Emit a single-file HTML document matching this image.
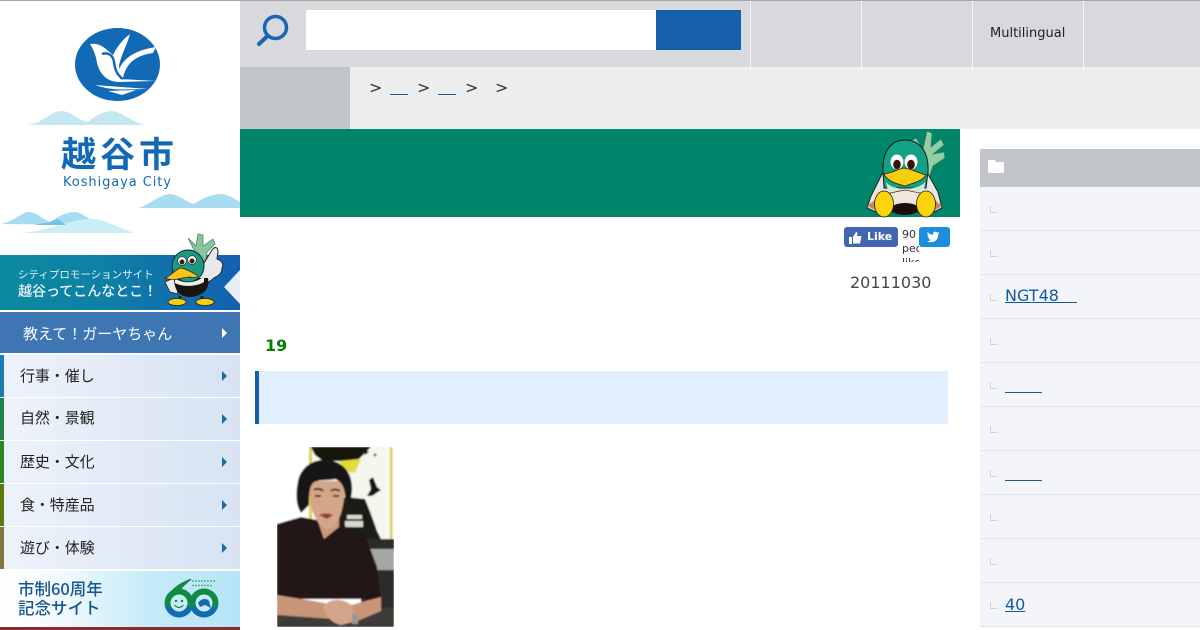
<!DOCTYPE html>
<html lang="ja"><head><meta charset="utf-8"><title>越谷市</title>
<style>
html,body{margin:0;padding:0}
body{width:1200px;height:630px;overflow:hidden;position:relative;background:#fff;font-family:"DejaVu Sans","Noto Sans CJK JP",sans-serif;color:#333}
.a{position:absolute}
.jp{font-family:"Noto Sans CJK JP","DejaVu Sans",sans-serif}
.nav{position:absolute;left:0;width:240px;height:42px;background:linear-gradient(90deg,#eef3fa 0,#dfe9f6 60%,#d7e4f3 100%);font-size:15px;color:#222}
.nav i{position:absolute;left:0;top:0;width:4px;height:100%}
.nav span{position:absolute;left:20px;top:10px;line-height:22px;letter-spacing:-.1px}
.nav b{position:absolute;left:222px;top:16px;width:0;height:0;border-left:5px solid #1c6a9e;border-top:5px solid transparent;border-bottom:5px solid transparent}
.row{position:absolute;left:980px;width:220px;height:43px;background:#f3f5f8;border-bottom:1px solid #e2e5e8}
.row i{position:absolute;left:10px;top:19px;width:6px;height:6px;border-left:1px solid #d0d3d6;border-bottom:1px solid #d0d3d6}
.row a{position:absolute;left:25px;top:11px;font-size:16px;line-height:20px;color:#0f5a9e;text-decoration:underline}
.u{position:absolute;height:1px;background:#1e5a92}
.sep{position:absolute;top:0;width:1px;height:71px;background:#f4f5f6}
.bc{position:absolute;top:78px;font-size:16px;line-height:20px;color:#333}
</style></head><body>

<!-- header -->
<div class="a" style="left:240px;top:1px;width:960px;height:66px;background:#d8d9dc"></div>
<div class="a" style="left:240px;top:67px;width:960px;height:62px;background:#eceef0"></div>
<div class="a" style="left:240px;top:67px;width:110px;height:62px;background:#c1c4c8"></div>
<div class="sep" style="left:750px"></div><div class="sep" style="left:861px"></div><div class="sep" style="left:972px"></div><div class="sep" style="left:1083px"></div>
<div class="a" style="left:0;top:0;width:1200px;height:1px;background:#a6a6a6"></div>
<svg class="a" style="left:255px;top:13px" width="36" height="36" viewBox="0 0 36 36"><circle cx="20.500" cy="14.500" r="11" fill="none" stroke="#1b66b0" stroke-width="3.500"/><path d="M12.500 23 L4 31" stroke="#1b66b0" stroke-width="4" stroke-linecap="round"/></svg>
<div class="a" style="left:306px;top:10px;width:350px;height:40px;background:#fff"></div>
<div class="a" style="left:656px;top:10px;width:85px;height:40px;background:#1560a8"></div>
<div class="a" style="left:990px;top:26px;font-size:13px;line-height:16px;color:#222">Multilingual</div>

<!-- breadcrumb -->
<div class="bc" style="left:369px">&gt;</div>
<div class="u" style="left:390px;top:94px;width:18px"></div>
<div class="bc" style="left:417px">&gt;</div>
<div class="u" style="left:438px;top:94px;width:18px"></div>
<div class="bc" style="left:465px">&gt;</div>
<div class="bc" style="left:495px">&gt;</div>

<!-- logo -->
<svg class="a" style="left:0;top:0" width="240" height="235" viewBox="0 0 240 235">
<ellipse cx="117.500" cy="64.500" rx="42.500" ry="36.500" fill="#1269b5"/>
<path d="M90 44 C96 43 101 45 106 49 L113 55 C117 47 122 40 130 34 C127 45 121 55 119 66 L120 79 L156 81 L118 82 C106 81 100 74 97 63 C96 55 93 49 90 44Z" fill="#fff"/>
<path d="M118 78 C117 65 128 51 156 47 L153 53 C138 55 126 62 123 78Z" fill="#fff"/>
<path d="M102 54 C108 52 113 55 114 62 C115 70 117 75 123 79" fill="none" stroke="#1269b5" stroke-width="2.500"/>
<path d="M95 85 L148 89 L120 89.500 C108 89 101 87 95 85Z M108 91 L136 90 L122 95Z" fill="#fff"/>
<path d="M28 125 C45 122 52 110 62 111 C72 112 78 120 88 122 C95 116 104 111 112 111 C122 112 132 122 145 125Z" fill="#c5e8f0"/>
<path d="M138 208 C150 205 160 194 170 194 C180 195 186 202 194 204 C202 198 212 194 222 194 C230 195 236 200 240 202 L240 208Z" fill="#a8dcf0"/>
<path d="M0 224 C15 222 20 212 30 212 C38 213 44 220 50 222 C58 217 65 212 75 212 C84 213 90 222 105 225Z" fill="#a6dcf0"/>
<path d="M20 233 C40 232 55 226 62 224 C72 222 82 218 95 219 C105 220 120 228 134 233Z" fill="#c9eef6"/>
<path d="M34 225 L50 222 L58 219 L66 225Z" fill="#6fc3e4"/>
<text x="61" y="167" font-family="Noto Sans CJK JP,sans-serif" font-weight="700" font-size="35" fill="#1269b5" textLength="113">越谷市</text>
<text x="63" y="186" font-family="DejaVu Sans,sans-serif" font-size="13" fill="#1269b5" textLength="108">Koshigaya City</text>
</svg>

<!-- promo banner -->
<div class="a" style="left:0;top:255px;width:240px;height:55px;background:linear-gradient(90deg,#0d8aa0 0,#0f7fa6 45%,#1460b0 100%)"></div>
<div class="a" style="left:224px;top:270px;width:0;height:0;border-right:16px solid #e8eef5;border-top:17px solid transparent;border-bottom:17px solid transparent"></div>
<div class="a jp" style="left:18px;top:266px;font-size:10.500px;line-height:17px;color:#e6f2f6;white-space:nowrap">シティプロモーションサイト</div>
<div class="a jp" style="left:18px;top:281px;font-size:14px;line-height:20px;color:#f0f6f8;white-space:nowrap;font-weight:500">越谷ってこんなとこ！</div>
<svg class="a" style="left:160px;top:232px" width="70" height="76" viewBox="0 0 70 76">
<path d="M28 6 L36 14 L38 2 L43 3 L43 14 L53 7 L55 12 L47 20 L46 28 L40 28 L34 18Z" fill="#86c69a" stroke="#3c7a55" stroke-width=".7"/>
<path d="M37 28 L45 22 L44 36 L38 38Z" fill="#86c69a"/>
<path d="M52 18 C55 14 58 15 58 20 L57 27 C62 28 64 33 62 36 C62 42 58 44 54 46 L44 54 L36 44Z" fill="#e6e8ec" stroke="#222" stroke-width="1"/>
<path d="M5 50 L14 46 L18 62 L10 60Z" fill="#e6e8ec" stroke="#222" stroke-width=".7"/>
<path d="M14 46 H48 C50 54 46 64 30 65 C18 65 14 56 14 46Z" fill="#1a1310"/>
<ellipse cx="28" cy="34" rx="16" ry="16" fill="#1a9a80" stroke="#123" stroke-width="1"/>
<path d="M15 46 C22 52 36 52 44 44 L44 50 C36 55 22 55 15 51Z" fill="#e8f2ec"/>
<circle cx="22" cy="29" r="4.300" fill="#fff" stroke="#222" stroke-width=".6"/><circle cx="32" cy="28" r="4.300" fill="#fff" stroke="#222" stroke-width=".6"/><circle cx="22" cy="30" r="2.500" fill="#3a1d10"/><circle cx="32" cy="29" r="2.500" fill="#3a1d10"/>
<path d="M5 46 C11 44 15 38 20 36 C26 36 32 41 37 43 C38 46 35 46 30 45 C22 45 15 50 5 46Z" fill="#f8c415" stroke="#222" stroke-width=".7"/>
<path d="M20 64 V68 M42 64 V68" stroke="#222" stroke-width="3"/>
<ellipse cx="17" cy="70" rx="9" ry="3.500" fill="#f8cf10" stroke="#222" stroke-width=".8"/><ellipse cx="45" cy="70" rx="9" ry="3.500" fill="#f8cf10" stroke="#222" stroke-width=".8"/>
</svg>

<!-- blue menu -->
<div class="a" style="left:0;top:312px;width:240px;height:41px;background:#3d76b3"></div>
<div class="a jp" style="left:23px;top:323px;font-size:15px;line-height:22px;color:#fff;white-space:nowrap">教えて！ガーヤちゃん</div>
<div class="a" style="left:222px;top:328px;width:0;height:0;border-left:5px solid #fff;border-top:5px solid transparent;border-bottom:5px solid transparent"></div>

<div class="nav" style="top:355px"><i style="background:#1f7bb0"></i><span>行事・催し</span><b></b></div>
<div class="nav" style="top:398px"><i style="background:#218048"></i><span style="top:9px">自然・景観</span><b></b></div>
<div class="nav" style="top:441px"><i style="background:#2a8a1d"></i><span>歴史・文化</span><b></b></div>
<div class="nav" style="top:484px"><i style="background:#5b7d10"></i><span>食・特産品</span><b></b></div>
<div class="nav" style="top:527px"><i style="background:#84763f"></i><span>遊び・体験</span><b></b></div>

<!-- 60th banner -->
<div class="a" style="left:0;top:571px;width:240px;height:56px;background:linear-gradient(90deg,#fff 0,#f4fbfe 22%,#c7ecf8 60%,#b4e5f6 100%)"></div>
<div class="a jp" style="left:18px;top:579px;font-size:16.500px;line-height:19px;color:#17568f;white-space:nowrap;font-weight:500">市制60周年<br>記念サイト</div>
<svg class="a" style="left:163px;top:576px" width="58" height="44" viewBox="0 0 58 44">
<defs><linearGradient id="g" x1="0" y1="0" x2="0" y2="1"><stop offset="0" stop-color="#118a45"/><stop offset=".55" stop-color="#118a45"/><stop offset=".7" stop-color="#126cb2"/><stop offset="1" stop-color="#126cb2"/></linearGradient></defs>
<path d="M27 3 C16 7 6 14 3 24 L12 22 C16 14 22 9 29 3Z" fill="#118a45"/>
<circle cx="16" cy="27" r="14.500" fill="url(#g)"/>
<circle cx="41" cy="27" r="14.500" fill="url(#g)"/>
<circle cx="16" cy="27" r="8.500" fill="#c8ebf6"/><circle cx="13" cy="25" r="1.200" fill="#118a45"/><circle cx="19" cy="25" r="1.200" fill="#118a45"/><path d="M11.500 29 Q16 34 20.500 29" stroke="#118a45" stroke-width="1.200" fill="none"/>
<circle cx="41" cy="27" r="8.500" fill="#c8ebf6"/><path d="M35 27 C38 22 44 22 46 25 L48 32 L42 29 L37 31Z" fill="#126cb2"/>
<path d="M29 5 H52 M29 9.500 H50" stroke="#118a45" stroke-width="1.500" stroke-dasharray="2 1" opacity=".6"/>
</svg>
<div class="a" style="left:0;top:627px;width:240px;height:3px;background:#8c2a2d"></div>

<!-- green title -->
<div class="a" style="left:240px;top:129px;width:720px;height:88px;background:#00846a"></div>
<svg class="a" style="left:860px;top:128px" width="90" height="90" viewBox="0 0 90 90">
<path d="M51 13 L56 10 L63 21 L67 3 L72 5 L71 19 L81 11 L84 17 L73 26 L84 24 L85 30 L73 38 L69 50 L62 48 L62 30Z" fill="#8fcfa4" stroke="#3a7a55" stroke-width=".7"/>
<path d="M22 46 L11 68 L7 80 L16 84 L74 84 L82 80 L78 64 L68 46Z" fill="#e8e6e2" stroke="#222" stroke-width="1"/>
<path d="M7 78 L15 72 L15 82Z M82 78 L75 72 L75 82Z" fill="#c98468"/>
<path d="M23 44 C22 22 32 12 45 12 C60 12 69 24 68 44 L66 60 L24 60Z" fill="#14a083" stroke="#1a1a1a" stroke-width="1"/>
<ellipse cx="37" cy="34" rx="6.500" ry="7.500" fill="#fff"/><ellipse cx="51" cy="34" rx="6.500" ry="7.500" fill="#fff"/>
<ellipse cx="37" cy="36.500" rx="3.800" ry="4.800" fill="#3a1408"/><ellipse cx="51" cy="36.500" rx="3.800" ry="4.800" fill="#3a1408"/>
<path d="M26 54 C32 63 58 63 65 54 L64 63 L28 63Z" fill="#cfeadc"/>
<path d="M24 46 C33 45 38 41 44 40 C52 41 58 45 66 47 C62 54 52 55 45 58 C38 56 28 54 24 46Z" fill="#f9cf0b" stroke="#222" stroke-width=".8"/>
<path d="M30 65 L45 62 L60 65 L60 78 L30 78Z" fill="#efe6dc" stroke="#5c2c1c" stroke-width=".7"/>
<ellipse cx="45" cy="81" rx="14" ry="6" fill="#1a0f0c"/>
<ellipse cx="24" cy="76" rx="9.500" ry="13" fill="#fbd40a" stroke="#222" stroke-width=".8"/>
<ellipse cx="66" cy="76" rx="9.500" ry="13" fill="#fbd40a" stroke="#222" stroke-width=".8"/>
</svg>

<!-- social -->
<div class="a" style="left:844px;top:227px;width:54px;height:20px;background:#4267b2;border-radius:3px;color:#fff;font-size:11px;font-weight:700;line-height:20px;text-indent:23px">Like</div>
<svg class="a" style="left:849px;top:231px" width="13" height="13" viewBox="0 0 13 13"><path d="M0 6 H3 V13 H0Z M4 6 L7 1 C8.500 1 9 2.500 8 5 H12.500 L11 12.500 H4Z" fill="#fff"/></svg>
<div class="a" style="left:902px;top:228px;width:17px;height:34px;overflow:hidden;font-size:11px;line-height:14px;color:#333">90<br>people<br>like</div>
<div class="a" style="left:919px;top:227px;width:31px;height:20px;background:#1b8fdd;border-radius:3px"></div>
<svg class="a" style="left:927px;top:231px" width="13" height="12" viewBox="0 0 24 22"><path d="M23 3.500 C22 4 21 4.300 20.300 4.400 C21.300 3.800 22 2.800 22.400 1.700 C21.400 2.300 20.300 2.700 19.100 3 C17 .8 13.700 .8 12 2.800 C11 4 10.700 5.400 11 7 C7 6.800 3.500 5 1.300 2 C0 4.300 .7 7 3 8.600 C2.200 8.600 1.400 8.300 .8 8 C.8 10.400 2.500 12.400 4.800 12.900 C4 13.100 3.300 13.100 2.600 13 C3.300 15 5 16.300 7.300 16.400 C5.200 18 2.700 18.700 .2 18.500 C2.500 20 5 20.700 7.700 20.700 C16 20.700 21 13.700 20.600 6.200 C21.600 5.500 22.400 4.600 23 3.500Z" fill="#fff"/></svg>

<!-- article -->
<div class="a" style="left:850px;top:273px;font-size:16px;line-height:20px;color:#444">20111030</div>
<div class="a" style="left:265px;top:336px;font-size:16px;line-height:20px;font-weight:700;color:#008000">19</div>
<div class="a" style="left:255px;top:371px;width:693px;height:53px;background:#e1eefb"></div>
<div class="a" style="left:255px;top:371px;width:4px;height:53px;background:#1560a8"></div>

<!-- photo -->
<svg class="a" style="left:277px;top:447px" width="117" height="180" viewBox="0 0 117 180">
<defs><clipPath id="c"><rect width="117" height="180"/></clipPath><filter id="b" x="-5%" y="-5%" width="110%" height="110%"><feGaussianBlur stdDeviation=".7"/></filter></defs>
<g clip-path="url(#c)"><g filter="url(#b)">
<rect width="117" height="180" fill="#fff"/>
<rect x="32" y="0" width="84" height="94" fill="#f6f5ee"/>
<rect x="32" y="0" width="3" height="94" fill="#d8d040"/><rect x="113" y="0" width="2.500" height="94" fill="#d8d040"/>
<path d="M34 0 H94 L88 6 L82 12 L66 14 L46 14 L38 8Z" fill="#17170f"/>
<path d="M62 14 L84 12 L78 26 L68 24Z" fill="#e3dd3a"/>
<path d="M86 2 L92 5 L88 8Z M97 6 L100 8 L97 10Z" fill="#1a1a14"/>
<path d="M92 33 L96 30 L100 40 L104 43 L95 49 L90 49 L94 42Z" fill="#14140f"/>
<path d="M68 50 L88 52 C92 62 96 72 100 84 L104 92 H50 L60 60Z" fill="#1c1c15"/>
<path d="M70 68 H85 V72 H70Z M68 74 H86 V80 H68Z" fill="#d9d8ca"/>
<rect x="32" y="92" width="85" height="10" fill="#2e2b28"/>
<rect x="88" y="102" width="29" height="21" fill="#a6a8a6"/>
<rect x="84" y="123" width="33" height="57" fill="#2f2a29"/>
<path d="M0 77 L24 70 L66 78 L90 93 L100 120 L104 152 L0 152Z" fill="#211716"/>
<path d="M0 180 V165 L117 160 V180Z" fill="#3c3a38"/>
<path d="M0 148 L48 156 L56 172 L0 168Z" fill="#c89578"/>
<path d="M104 150 L74 158 L78 175 L104 164Z" fill="#c89578"/>
<path d="M46 160 C52 150 68 152 74 158 L80 174 L64 178 C54 176 48 168 46 160Z" fill="#d4a38a"/>
<rect x="75" y="166" width="6" height="11" fill="#9b9892"/>
<path d="M40 72 L47 92 L62 80 L62 70Z" fill="#c99a7e"/>
<path d="M32 34 C31 58 38 78 50 82 C62 82 68 60 68 34Z" fill="#d5a588"/>
<path d="M24 66 C18 56 19 44 21 34 C24 20 36 12 50 13 C66 14 76 26 75 44 L73 58 L68 50 C68 40 64 34 58 32 C50 34 40 32 36 36 C32 40 32 50 32 58Z" fill="#171312"/>
<path d="M42 68 C46 66 52 66 56 68 L50 72Z" fill="#8a3f34"/>
<path d="M37 43 C40 41 44 42 46 44 M54 44 C56 42 60 42 63 44" stroke="#241a16" stroke-width="1.800" fill="none"/>
<path d="M38 49 H44 M56 49 H62" stroke="#30201a" stroke-width="1.800"/>
</g></g>
</svg>

<!-- sidebar -->
<div class="a" style="left:980px;top:149px;width:220px;height:38px;background:#c1c4c8"></div>
<svg class="a" style="left:988px;top:160px" width="16" height="14" viewBox="0 0 16 14"><path d="M0 0 H7 L8 2 H16 V13 H0Z" fill="#fff"/></svg>
<div class="row" style="top:187px"><i></i></div>
<div class="row" style="top:231px"><i></i></div>
<div class="row" style="top:275px"><i></i><a style="display:inline-block;width:72px;white-space:nowrap;overflow:hidden">NGT48&nbsp;&nbsp;&nbsp;&nbsp;&nbsp;&nbsp;</a></div>
<div class="row" style="top:319px"><i></i></div>
<div class="row" style="top:363px"><i></i><div class="u" style="left:25px;top:29px;width:37px"></div></div>
<div class="row" style="top:407px"><i></i></div>
<div class="row" style="top:451px"><i></i><div class="u" style="left:25px;top:29px;width:37px"></div></div>
<div class="row" style="top:495px"><i></i></div>
<div class="row" style="top:539px"><i></i></div>
<div class="row" style="top:583px"><i></i><a style="top:12px">40</a></div>

</body></html>
